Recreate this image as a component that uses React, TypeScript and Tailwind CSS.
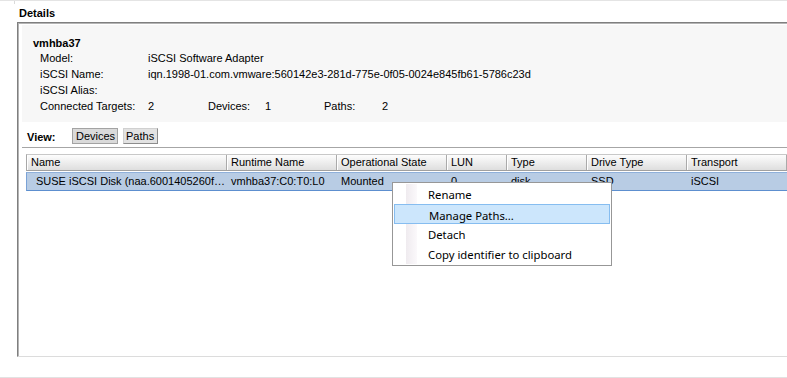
const headerCols = [
  { label: "Name", value: "SUSE iSCSI Disk (naa.6001405260f…", w: "w-[200px]", first: true },
  { label: "Runtime Name", value: "vmhba37:C0:T0:L0", w: "w-[110px]" },
  { label: "Operational State", value: "Mounted", w: "w-[110px]" },
  { label: "LUN", value: "0", w: "w-[60px]" },
  { label: "Type", value: "disk", w: "w-[80px]" },
  { label: "Drive Type", value: "SSD", w: "w-[100px]" },
  { label: "Transport", value: "iSCSI", w: "w-[100px]" },
];

const menuItems = ["Rename", "Manage Paths...", "Detach", "Copy identifier to clipboard"];

export default function App() {
  return (
    <div className="relative w-[787px] h-[378px] overflow-hidden bg-white text-[11px] text-black font-['Liberation_Sans',Arial,sans-serif]">
      {/* top strip */}
      <div className="h-[5px] border-t border-[#e4e4e4]">
        <div className="ml-[14px] w-px h-[3px] bg-[#dadada]" />
      </div>
      {/* Details heading */}
      <div className="h-[17px] pl-[19px] font-bold leading-[14px] pt-[1px]">Details</div>

      {/* panel */}
      <div className="ml-[17px] h-[335px] border-t border-l border-[#7f7f7f] border-b border-b-[#dcdcdc]">
        <div className="h-full border-t border-l border-[#b4b4b4] border-b-0 pl-[3px] pt-[1px] flex flex-col">
          {/* gray info block */}
          <div className="h-[97px] bg-[#f7f7f7] pl-[11px] pt-[10px]">
            <div className="h-[15px] leading-[16px] font-bold">vmhba37</div>
            <div className="pl-[7px] leading-[16px]">
              <div className="flex h-[16px]">
                <div className="w-[108px]">Model:</div>
                <div>iSCSI Software Adapter</div>
              </div>
              <div className="flex h-[16px]">
                <div className="w-[108px]">iSCSI Name:</div>
                <div>iqn.1998-01.com.vmware:560142e3-281d-775e-0f05-0024e845fb61-5786c23d</div>
              </div>
              <div className="flex h-[16px]">
                <div className="w-[108px]">iSCSI Alias:</div>
                <div></div>
              </div>
              <div className="flex h-[16px]">
                <div className="w-[108px]">Connected Targets:</div>
                <div className="w-[60px]">2</div>
                <div className="w-[57px]">Devices:</div>
                <div className="w-[59px]">1</div>
                <div className="w-[58px]">Paths:</div>
                <div>2</div>
              </div>
            </div>
          </div>

          {/* View row */}
          <div className="h-[26px] border-b border-[#a6a6a6] flex items-start pt-[6px] pl-[5px]">
            <div className="w-[45px] font-bold leading-[16px] pt-[1px]">View:</div>
            <div className="h-[16px] w-[46px] border border-[#a3a3a3] bg-[#dadada] leading-[14px] pl-[3px]">Devices</div>
            <div className="ml-[5px] h-[16px] w-[35px] border border-t-[#d0d0d0] border-l-[#d0d0d0] border-r-[#8c8c8c] border-b-[#8c8c8c] bg-[#e2e2e2] leading-[14px] pl-[2px]">Paths</div>
          </div>

          {/* table */}
          <div className="ml-[4px] mt-[6px]">
            <div className="flex h-[17px] border-t border-b border-l border-t-[#c8c8c8] border-b-[#a0a0a0] border-l-[#a8a8a8] bg-linear-to-b from-[#fdfdfd] to-[#dedede]">
              {headerCols.map((c) => (
                <div
                  key={c.label}
                  className={`${c.w} shrink-0 border-r border-[#aaaaaa] shadow-[inset_1px_0_0_#ffffff] pl-[4px] leading-[15px] whitespace-nowrap overflow-hidden`}
                >
                  {c.label}
                </div>
              ))}
            </div>
            <div className="mt-[1px] flex h-[19px] bg-[#b8cce4] border-t border-l border-b border-t-[#8fb0da] border-l-[#7aa2d6] border-b-[#5d8fcf]">
              {headerCols.map((c) => (
                <div
                  key={c.label}
                  className={`${c.w} shrink-0 ${c.first ? "pl-[9px] pr-[8px]" : "pl-[4px]"} leading-[17px] whitespace-nowrap overflow-hidden`}
                >
                  {c.value}
                </div>
              ))}
            </div>
          </div>
        </div>
      </div>

      {/* bottom line */}
      <div className="mt-[20px] h-px bg-[#e2e2e2]" />

      {/* context menu */}
      <div className="absolute left-[392px] top-[182px] w-[220px] h-[84px] bg-white border border-[#979797] p-px font-['Noto_Sans',sans-serif] text-[11.3px]">
        <div className="absolute left-[13px] top-px bottom-px w-[11px] bg-linear-to-r from-[#efebef] to-[#fbf9fb]" />
        {menuItems.map((m, i) => (
          <div
            key={m}
            className={`relative h-[20px] leading-[21px] pl-[34px] ${
              i === 1 ? "bg-[#cce6fc] border border-[#86bdf0] pl-[33px] leading-[19px]" : ""
            }`}
          >
            {m}
          </div>
        ))}
      </div>
    </div>
  );
}
